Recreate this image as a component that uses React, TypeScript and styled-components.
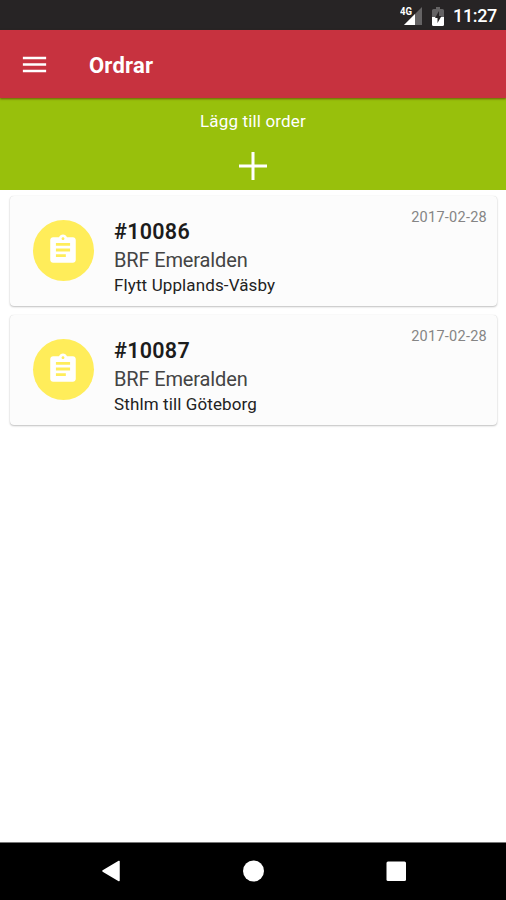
import React from "react";
import styled, { createGlobalStyle } from "styled-components";

const GlobalStyle = createGlobalStyle`
  * { box-sizing: border-box; }
  body { margin: 0; background: #fff; font-family: Roboto, "Noto Sans", sans-serif; }
`;

const Screen = styled.div`
  display: flex;
  flex-direction: column;
  width: 506px;
  height: 900px;
  overflow: hidden;
  background: #fff;
`;

const StatusBar = styled.div`
  display: flex;
  align-items: center;
  justify-content: flex-end;
  flex: none;
  height: 30px;
  padding: 2px 9px 0 0;
  background: #272425;
  color: #fff;
`;

const Clock = styled.span`
  width: 44px;
  margin-left: 8px;
  font-size: 18px;
  font-weight: 500;
  line-height: 28px;
  letter-spacing: -0.35px;
  white-space: nowrap;
`;

const AppBar = styled.header`
  display: flex;
  align-items: center;
  flex: none;
  height: 68px;
  padding: 1px 0 0 19px;
  gap: 39px;
  position: relative;
  background: #c7323f;
  box-shadow: 0 1px 2px rgba(70, 30, 0, 0.6);
`;

const Title = styled.h1`
  margin: 0;
  padding-top: 2px;
  color: #fff;
  font-size: 22px;
  font-weight: 700;
  line-height: 30px;
  letter-spacing: 0.2px;
`;

const MenuButton = styled.button`
  display: flex;
  padding: 0;
  border: 0;
  background: none;
`;

const AddOrder = styled.button`
  display: flex;
  flex-direction: column;
  align-items: center;
  flex: none;
  height: 92px;
  padding: 13px 0 0;
  border: 0;
  background: #98c00c;
  color: #fff;
  font: 400 17px/20px Roboto, sans-serif;
  letter-spacing: 0.16px;
`;

const PlusIcon = styled.svg`
  margin-top: 21px;
`;

const OrderList = styled.main`
  display: flex;
  flex-direction: column;
  flex: 1;
  gap: 9px;
  padding: 6px 9px 0 10px;
`;

const Card = styled.article`
  display: flex;
  flex: none;
  height: 110px;
  padding: 0 10px 0 23px;
  border-radius: 4px;
  background: #fcfcfc;
  box-shadow: 0 1px 2px rgba(0, 0, 0, 0.24), 0 0 1px rgba(0, 0, 0, 0.15);
`;

const Avatar = styled.div`
  display: flex;
  align-items: center;
  justify-content: center;
  width: 61px;
  height: 61px;
  margin-top: 24px;
  padding: 0 1px 1px 0;
  border-radius: 50%;
  background: #ffed5a;
`;

const Details = styled.div`
  flex: 1;
  padding: 22px 0 0 20px;
  white-space: nowrap;
`;

const OrderNumber = styled.div`
  color: #1c1c1c;
  font-size: 21.5px;
  font-weight: 600;
  line-height: 28px;
  letter-spacing: 0.28px;
`;

const Customer = styled.div`
  padding-top: 1px;
  color: #444;
  font-size: 20px;
  line-height: 27px;
  letter-spacing: -0.14px;
`;

const Description = styled.div`
  color: #222;
  font-size: 17px;
  line-height: 23px;
  letter-spacing: 0.12px;
`;

const OrderDate = styled.time`
  margin-top: 12px;
  color: #858585;
  font-size: 14.5px;
  line-height: 20px;
  letter-spacing: 0.26px;
  white-space: nowrap;
`;

const NavBar = styled.nav`
  display: flex;
  justify-content: space-between;
  flex: none;
  height: 58.5px;
  padding: 16px 98px 0 99px;
  border-top: 1px solid #777;
  background: #000;
`;

const orders = [
  { id: "#10086", customer: "BRF Emeralden", text: "Flytt Upplands-Väsby", date: "2017-02-28" },
  { id: "#10087", customer: "BRF Emeralden", text: "Sthlm till Göteborg", date: "2017-02-28" },
];

const SignalIcon = () => (
  <svg width="24" height="20" viewBox="0 0 24 20">
    <path d="M4 19 22 1V19Z" fill="#656364" />
    <path d="M4 19 15 8V19Z" fill="#fff" />
    <path d="M0 0H13V8L11 10H0Z" fill="#272425" />
    <text x="0" y="8.5" fill="#fff" fontSize="10" fontWeight="700" textLength="12" lengthAdjust="spacingAndGlyphs">4G</text>
  </svg>
);

const BatteryIcon = () => (
  <svg width="12" height="19" viewBox="0 0 12 19">
    <path d="M4 0H8V2H10.5Q12 2 12 3.5V11H0V3.5Q0 2 1.5 2H4Z" fill="#656364" />
    <path d="M0 10H12V17.5Q12 19 10.5 19H1.5Q0 19 0 17.5Z" fill="#fff" />
    <path d="M7 4 3 11H5.5V16L9.5 9H7Z" fill="#272425" />
  </svg>
);

const AssignmentIcon = () => (
  <svg width="34" height="34" viewBox="0 0 24 24" fill="#fff">
    <path d="M19 3h-4.18C14.4 1.84 13.3 1 12 1s-2.4.84-2.82 2H5c-1.1 0-2 .9-2 2v14c0 1.1.9 2 2 2h14c1.1 0 2-.9 2-2V5c0-1.1-.9-2-2-2zm-7 0c.55 0 1 .45 1 1s-.45 1-1 1-1-.45-1-1 .45-1 1-1zm2 14H7v-2h7v2zm3-4H7v-2h10v2zm0-4H7V7h10v2z" />
  </svg>
);

const StatusIcons = styled.div`
  display: flex;
  align-items: center;
  gap: 8px;
  margin-right: 1px;
`;

export default function App() {
  return (
    <Screen>
      <GlobalStyle />
      <StatusBar>
        <StatusIcons>
          <SignalIcon />
          <BatteryIcon />
        </StatusIcons>
        <Clock>11:27</Clock>
      </StatusBar>
      <AppBar>
        <MenuButton aria-label="Meny">
          <svg width="31" height="31" viewBox="0 0 24 24" fill="#fff">
            <path d="M3 18h18v-2H3v2zm0-5h18v-2H3v2zm0-7v2h18V6H3z" />
          </svg>
        </MenuButton>
        <Title>Ordrar</Title>
      </AppBar>
      <AddOrder>
        Lägg till order
        <PlusIcon width="28" height="28" viewBox="0 0 28 28">
          <path d="M14 0V28M0 14H28" stroke="#fff" strokeWidth="3" />
        </PlusIcon>
      </AddOrder>
      <OrderList>
        {orders.map((o) => (
          <Card key={o.id}>
            <Avatar>
              <AssignmentIcon />
            </Avatar>
            <Details>
              <OrderNumber>{o.id}</OrderNumber>
              <Customer>{o.customer}</Customer>
              <Description>{o.text}</Description>
            </Details>
            <OrderDate>{o.date}</OrderDate>
          </Card>
        ))}
      </OrderList>
      <NavBar>
        <svg width="24" height="24" viewBox="0 0 24 24">
          <path d="M4 12 20 2.5V21.5Z" fill="#fff" stroke="#fff" strokeWidth="1.5" strokeLinejoin="round" />
        </svg>
        <svg width="24" height="24" viewBox="0 0 24 24">
          <circle cx="11.5" cy="12" r="10.5" fill="#fff" />
        </svg>
        <svg width="24" height="24" viewBox="0 0 24 24">
          <rect x="2.5" y="2.5" width="19.5" height="19.5" rx="1.5" fill="#fff" />
        </svg>
      </NavBar>
    </Screen>
  );
}
